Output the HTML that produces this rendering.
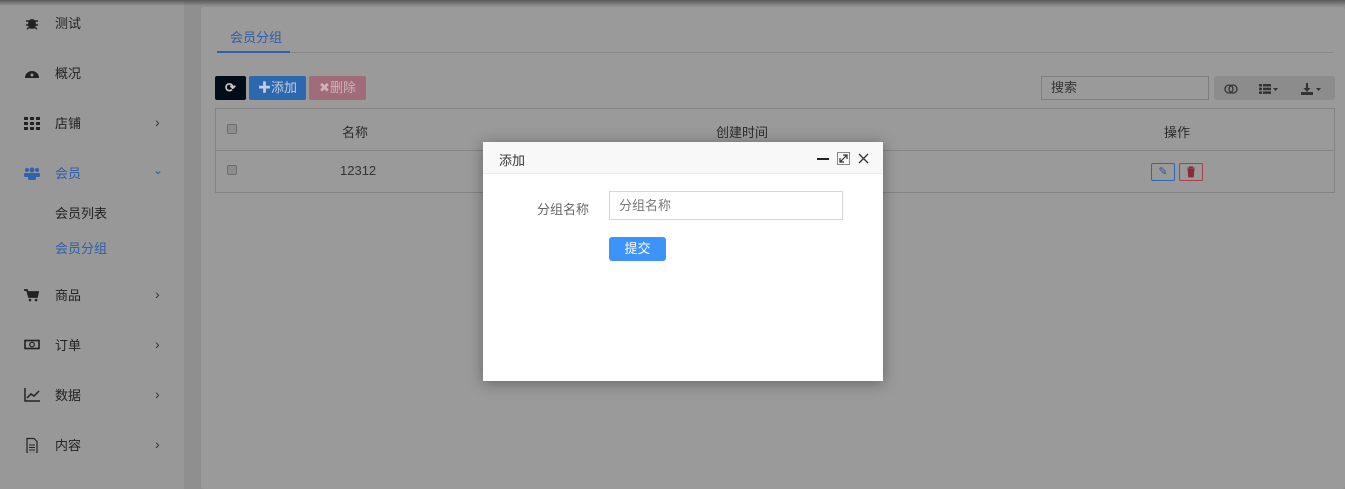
<!DOCTYPE html>
<html><head><meta charset="utf-8"><style>
*{margin:0;padding:0;box-sizing:border-box}
body{width:1345px;height:489px;overflow:hidden;background:#8f8f8f;font-family:"Liberation Sans","Noto Sans CJK SC",sans-serif;font-size:13px;color:#2a2a2a;position:relative}
.a{position:absolute}
.side{left:0;top:0;width:184px;height:489px;background:#989898}
.mi{position:absolute;left:0;width:184px;height:20px}
.mi .ic{position:absolute;left:24px;top:3px;width:16px;height:14px}
.mi .t{position:absolute;left:55px;top:0;font-size:13px;color:#222}
.mi .ar{position:absolute;left:155px;top:1px;color:#333;font-size:14px}
.main{left:201px;top:7px;width:1144px;height:482px;background:#9a9a9a;border-radius:3px}
.topsh{left:0;top:0;width:1345px;height:6px;background:linear-gradient(#5a5a5a,rgba(143,143,143,0));z-index:5}
.btn{position:absolute;top:76px;height:24px;border-radius:2px;color:#c9d6e6;font-size:13px;line-height:24px;text-align:center}
.modal{left:483px;top:142px;width:400px;height:239px;background:#fff;box-shadow:0 2px 14px rgba(0,0,0,.35)}
.cb{position:absolute;width:10px;height:10px;border:1px solid #6d6d6d;border-radius:2px;background:#8c8c8c}
</style></head><body>
<div class="a side">
 <div class="mi" style="top:13px"><svg class="ic" viewBox="0 0 16 14"><ellipse cx="8" cy="8" rx="4" ry="5" fill="#222"/><path d="M2 5h12M2 9h12M3 13l3-2M13 13l-3-2" stroke="#222" stroke-width="1.5"/></svg><span class="t">测试</span></div>
 <div class="mi" style="top:63px"><svg class="ic" viewBox="0 0 16 14"><path d="M1 12A7 7 0 1 1 15 12Z" fill="#222"/><circle cx="8" cy="9" r="1.5" fill="#989898"/></svg><span class="t">概况</span></div>
 <div class="mi" style="top:113px"><svg class="ic" viewBox="0 0 16 14"><g fill="#222"><rect x="0" y="1" width="4" height="3"/><rect x="6" y="1" width="4" height="3"/><rect x="12" y="1" width="4" height="3"/><rect x="0" y="6" width="4" height="3"/><rect x="6" y="6" width="4" height="3"/><rect x="12" y="6" width="4" height="3"/><rect x="0" y="11" width="4" height="3"/><rect x="6" y="11" width="4" height="3"/><rect x="12" y="11" width="4" height="3"/></g></svg><span class="t">店铺</span><span class="ar">›</span></div>
 <div class="mi" style="top:163px"><svg class="ic" viewBox="0 0 16 14"><g fill="#2f63b0"><circle cx="3" cy="4" r="2"/><circle cx="13" cy="4" r="2"/><circle cx="8" cy="4" r="2.5"/><rect x="0" y="7" width="5" height="4" rx="1"/><rect x="11" y="7" width="5" height="4" rx="1"/><rect x="4" y="7" width="8" height="7" rx="1.5"/></g></svg><span class="t" style="color:#2f5ea8">会员</span><span class="ar" style="color:#2f5ea8;font-size:12px;top:0px;left:153px">⌄</span></div>
 <div class="mi" style="top:203px"><span class="t">会员列表</span></div>
 <div class="mi" style="top:238px"><span class="t" style="color:#2f5ea8">会员分组</span></div>
 <div class="mi" style="top:285px"><svg class="ic" viewBox="0 0 16 14"><path d="M0 2h3l2 7h8l1-5H4" stroke="#222" stroke-width="1.8" fill="#222"/><circle cx="6" cy="12" r="1.3" fill="#222"/><circle cx="12" cy="12" r="1.3" fill="#222"/></svg><span class="t">商品</span><span class="ar">›</span></div>
 <div class="mi" style="top:335px"><svg class="ic" viewBox="0 0 16 14"><rect x="1" y="2.5" width="14" height="8" fill="none" stroke="#222" stroke-width="1.6"/><circle cx="8" cy="6.5" r="2.3" fill="none" stroke="#222" stroke-width="1.2"/></svg><span class="t">订单</span><span class="ar">›</span></div>
 <div class="mi" style="top:385px"><svg class="ic" viewBox="0 0 16 14"><path d="M1 0v13h15M3 10l4-4 3 2 5-5" stroke="#222" stroke-width="1.5" fill="none"/></svg><span class="t">数据</span><span class="ar">›</span></div>
 <div class="mi" style="top:435px"><svg class="ic" viewBox="0 0 16 14" style="height:16px;top:2px"><path d="M3 0.5h7l3 3v12H3z" fill="none" stroke="#222" stroke-width="1.2"/><path d="M5 7h6M5 9.5h6M5 12h6" stroke="#222"/></svg><span class="t">内容</span><span class="ar">›</span></div>
</div>
<div class="a topsh"></div>
<div class="a main"></div>
<div class="a" style="left:217px;top:52px;width:1116px;height:1px;background:#888"></div>
<div class="a" style="left:230px;top:27px;color:#2f5ea8;font-size:13px">会员分组</div>
<div class="a" style="left:217px;top:51px;width:73px;height:2px;background:#2e62a8"></div>
<div class="btn" style="left:215px;width:31px;background:#020d18;color:#ccc;font-weight:bold">⟳</div>
<div class="btn" style="left:249px;width:57px;background:#2d67ae;color:#c2cfe0">✚添加</div>
<div class="btn" style="left:309px;width:57px;background:#a06c79;color:#cfb2b8">✖删除</div>
<div class="a" style="left:1041px;top:76px;width:168px;height:24px;border:1px solid #7e7e7e;padding-left:9px;line-height:22px;color:#333">搜索</div>
<div class="a" style="left:1214px;top:76px;width:121px;height:24px;background:#8c8c8c;border-radius:3px"></div>
<svg class="a" style="left:1224px;top:83px" width="120" height="12" viewBox="0 0 120 12"><circle cx="5" cy="6" r="4" fill="none" stroke="#333" stroke-width="1.3"/><circle cx="9" cy="6" r="4" fill="none" stroke="#333" stroke-width="1.3"/><g fill="#333"><rect x="35" y="1" width="3" height="2.5"/><rect x="39" y="1" width="8" height="2.5"/><rect x="35" y="4.7" width="3" height="2.5"/><rect x="39" y="4.7" width="8" height="2.5"/><rect x="35" y="8.4" width="3" height="2.5"/><rect x="39" y="8.4" width="8" height="2.5"/><path d="M49 5h5l-2.5 3z"/><path d="M82 0h2v5h2.5l-3.5 4-3.5-4H82zM77 9h12v3H77z"/><path d="M92 5h5l-2.5 3z"/></g></svg>
<div class="a" style="left:215px;top:108px;width:1120px;height:85px;border:1px solid #848484"></div>
<div class="a" style="left:216px;top:150px;width:1118px;height:1px;background:#848484"></div>
<div class="cb" style="left:227px;top:124px"></div>
<div class="cb" style="left:227px;top:165px"></div>
<div class="a" style="left:342px;top:122px">名称</div>
<div class="a" style="left:716px;top:122px">创建时间</div>
<div class="a" style="left:1164px;top:122px">操作</div>
<div class="a" style="left:340px;top:163px;color:#333">12312</div>
<div class="a" style="left:1151px;top:163px;width:24px;height:18px;border:1px solid #2d67ae;border-radius:2px;color:#2d4fa8;font-size:11px;text-align:center;line-height:16px">✎</div>
<div class="a" style="left:1179px;top:163px;width:24px;height:18px;border:1px solid #a8404f;border-radius:2px;text-align:center"><svg width="10" height="12" viewBox="0 0 10 12" style="margin-top:2px"><path d="M1 2h8M3.5 2V0.8h3V2M2 3h6l-.6 8H2.6z" fill="#8a2a36" stroke="#8a2a36" stroke-width=".8"/></svg></div>
<div class="a modal">
 <div style="height:32px;background:#f8f8f8;border-bottom:1px solid #eee;position:relative">
  <span style="position:absolute;left:16px;top:8px;font-size:13px;color:#333">添加</span>
  <div style="position:absolute;left:334px;top:16px;width:12px;height:2px;background:#222"></div>
  <svg style="position:absolute;left:354px;top:10px" width="13" height="13" viewBox="0 0 13 13"><rect x=".5" y=".5" width="12" height="12" fill="none" stroke="#888"/><path d="M3 10L10 3M6 3h4v4M3 6v4h4" fill="none" stroke="#333" stroke-width="1.2"/></svg>
  <svg style="position:absolute;left:375px;top:11px" width="11" height="11" viewBox="0 0 11 11"><path d="M1 1l9 9M10 1l-9 9" stroke="#333" stroke-width="1.3"/></svg>
 </div>
 <div style="position:absolute;left:54px;top:57px;color:#666;font-size:13px">分组名称</div>
 <div style="position:absolute;left:126px;top:49px;width:234px;height:29px;border:1px solid #d5d5dc;padding-left:9px;line-height:27px;color:#777">分组名称</div>
 <div style="position:absolute;left:126px;top:95px;width:57px;height:24px;background:#3e93f8;border-radius:3px;color:#fff;text-align:center;line-height:24px">提交</div>
</div>
</body></html>
